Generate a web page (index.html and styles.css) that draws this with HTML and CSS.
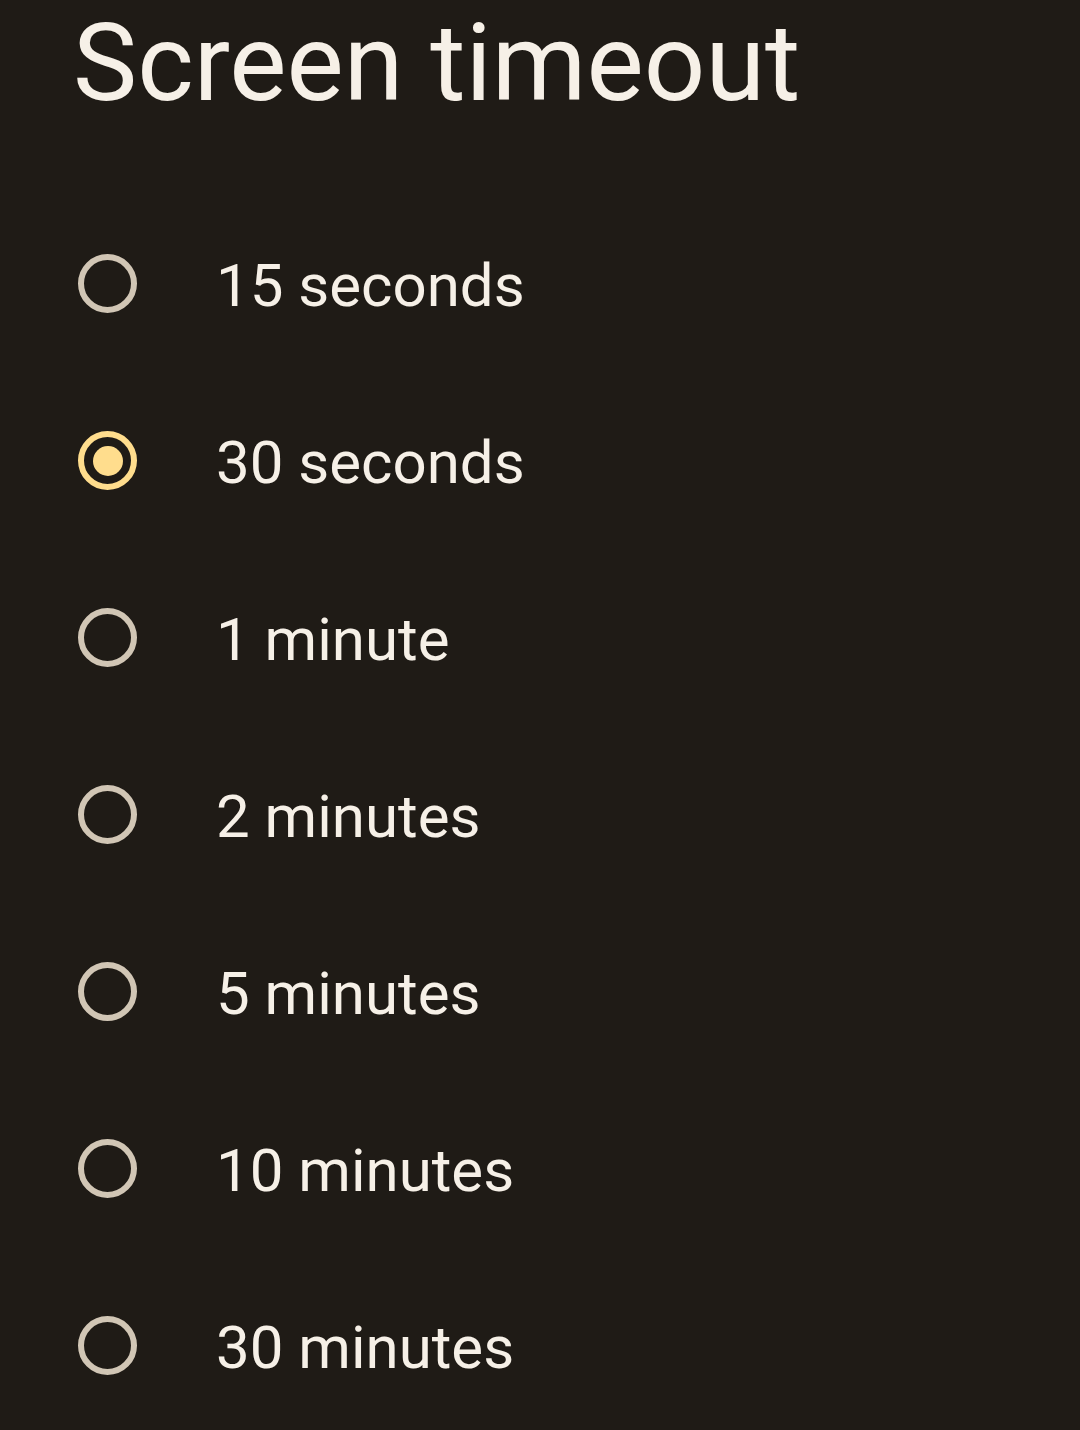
FILE: index.html
```html
<!DOCTYPE html>
<html lang="en">
<head>
    <meta charset="UTF-8">
    <title>Screen timeout</title>
    <link rel="stylesheet" href="styles.css">
</head>
<body>
    <h1 class="page-title">Screen timeout</h1>

    <div class="option-list">
        <label class="option">
            <span class="radio"></span>
            <span class="option-label">15 seconds</span>
        </label>
        <label class="option">
            <span class="radio checked"></span>
            <span class="option-label">30 seconds</span>
        </label>
        <label class="option">
            <span class="radio"></span>
            <span class="option-label">1 minute</span>
        </label>
        <label class="option">
            <span class="radio"></span>
            <span class="option-label">2 minutes</span>
        </label>
        <label class="option">
            <span class="radio"></span>
            <span class="option-label">5 minutes</span>
        </label>
        <label class="option">
            <span class="radio"></span>
            <span class="option-label">10 minutes</span>
        </label>
        <label class="option">
            <span class="radio"></span>
            <span class="option-label">30 minutes</span>
        </label>
    </div>
</body>
</html>
```

FILE: styles.css
```css
* {
    box-sizing: border-box;
    margin: 0;
    padding: 0;
}

body {
    background: #1f1b16;
    color: #f6f0e7;
    font-family: Roboto, "Noto Sans", sans-serif;
    min-height: 100vh;
    overflow: hidden;
}

.page-title {
    font-size: 108px;
    font-weight: 400;
    line-height: 108px;
    padding: 9px 0 0 73px;
    height: 195px;
}

.option-list {
    display: flex;
    flex-direction: column;
}

.option {
    display: flex;
    align-items: center;
    height: 177px;
    padding-left: 78px;
    gap: 79px;
}

.radio {
    width: 59px;
    height: 59px;
    border-radius: 50%;
    border: 6.5px solid #d1c6b5;
    display: flex;
    align-items: center;
    justify-content: center;
    flex-shrink: 0;
}

.radio.checked {
    border-color: #ffdd8d;
}

.radio.checked::after {
    content: "";
    width: 30px;
    height: 30px;
    border-radius: 50%;
    background: #ffdd8d;
}

.option-label {
    font-size: 60px;
    line-height: 1;
    padding-top: 5px;
}
```
